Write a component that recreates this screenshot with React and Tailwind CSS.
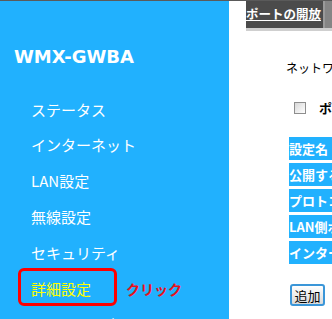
import React from 'react';

const menu = ['ステータス', 'インターネット', 'LAN設定', '無線設定', 'セキュリティ', '詳細設定', 'システム設定'];
const heads = ['設定名', '公開するポート', 'プロトコル', 'LAN側ポート', 'インターネット側ポート'];

const jp = "font-['Noto_Sans_CJK_JP','Noto_Sans',sans-serif]";

export default function App() {
  return (
    <div className={`w-[332px] h-[319px] overflow-hidden bg-white border-t border-[#5a5a5a] flex ${jp}`}>
      {/* sidebar */}
      <div className="w-[229px] h-[318px] shrink-0 bg-[#21b1fe] flex flex-col overflow-hidden">
        <div className="shrink-0 pt-[45px] pl-[14px] h-[93px] font-['DejaVu_Sans',sans-serif] font-bold text-[18px] leading-[22px] text-white">
          WMX-GWBA
        </div>
        {menu.map((item, i) => {
          const active = item === '詳細設定';
          return (
            <div
              key={item}
              className={`relative flex items-center pl-[31px] shrink-0 text-[15px] ${i === 0 ? 'h-[33px]' : 'h-[36px]'} ${active ? 'text-[#ffff00]' : 'text-white'}`}
            >
              {active && (
                <div className="absolute left-[18px] top-[-3px] w-[99px] h-[38px] border-[3px] border-[#ff0000] rounded-[6px]" />
              )}
              <span>{item}</span>
              {active && (
                <span className="ml-[35px] text-[14px] font-bold text-[#e8121c]">クリック</span>
              )}
            </div>
          );
        })}
      </div>

      {/* main */}
      <div className="flex-1 min-w-0 flex flex-col">
        <div className="ml-[17px] flex h-[27px] shrink-0">
          <div className="w-[77px] shrink-0 bg-[#4b4b4b] flex items-center text-white font-bold text-[12.5px] underline whitespace-nowrap overflow-hidden">
            ポートの開放
          </div>
          <div className="flex-1 bg-[#858585] border-l-2 border-[#9a9a9a]" />
        </div>
        <div className="ml-[17px] h-[3px] shrink-0 bg-[#cfcfcf]" />

        <div className="mt-[29px] pl-[57px] text-[12px] leading-[16px] text-black whitespace-nowrap">
          ネットワーク外部からのアクセスを許可します。
        </div>

        <div className="mt-[24px] pl-[65px] h-[16px] flex items-center gap-[13px] whitespace-nowrap">
          <span className="w-[12px] h-[12px] shrink-0 border border-[#8e8e8e] bg-gradient-to-br from-[#d8d8d8] to-[#ffffff]" />
          <span className="text-[13px] font-bold text-black">ポートの開放を有効にする</span>
        </div>

        <div className="mt-[21px] pl-[60px] flex flex-col gap-[3px]">
          {heads.map((h) => (
            <div key={h} className="h-[23px] bg-[#21b1fe] flex items-center text-white font-bold text-[13px] whitespace-nowrap">
              {h}
            </div>
          ))}
        </div>

        <div className="mt-[20px] pl-[61px]">
          <button className="w-[35px] h-[22px] border-2 border-[#3b96d8] rounded-[3px] bg-gradient-to-b from-[#ffffff] to-[#d9d9d9] text-[13px] leading-none text-black flex items-center justify-center">
            追加
          </button>
        </div>
      </div>
    </div>
  );
}
